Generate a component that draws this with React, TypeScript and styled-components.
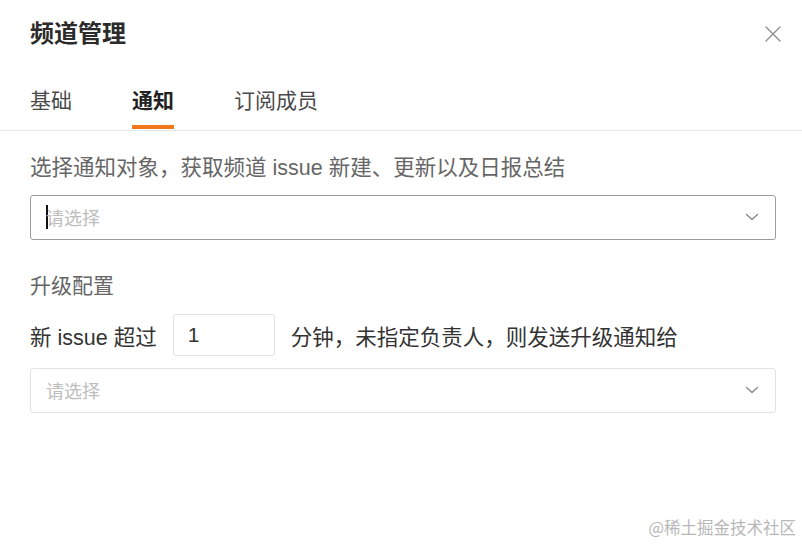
import React from "react";
import styled, { createGlobalStyle } from "styled-components";

const GlobalStyle = createGlobalStyle`
  html, body {
    margin: 0;
    padding: 0;
    background: #fff;
  }
  body {
    font-family: "Liberation Sans", "Noto Sans CJK SC", sans-serif;
  }
`;

const tabs = ["基础", "通知", "订阅成员"];

function Chevron() {
  return (
    <svg width="14" height="14" viewBox="0 0 14 14" fill="none">
      <path d="M1.5 4.5 L7 9.5 L12.5 4.5" stroke="#8a8a8a" strokeWidth="1.4" strokeLinecap="round" strokeLinejoin="round" />
    </svg>
  );
}

function Select({ focused }: { focused?: boolean }) {
  return (
    <SelectBox $focused={focused}>
      <Value>
        {focused && <Caret />}
        <Placeholder>请选择</Placeholder>
      </Value>
      <Chevron />
    </SelectBox>
  );
}

export default function App() {
  return (
    <>
      <GlobalStyle />
      <Page>
        <TitleRow>
          <Title>频道管理</Title>
          <CloseButton aria-label="关闭">
            <svg width="16" height="16" viewBox="0 0 16 16" fill="none">
              <path d="M1 1 L15 15 M15 1 L1 15" stroke="#8c8c8c" strokeWidth="1.3" strokeLinecap="round" />
            </svg>
          </CloseButton>
        </TitleRow>

        <TabBar>
          {tabs.map((t) => (
            <Tab key={t} $active={t === "通知"}>
              {t}
            </Tab>
          ))}
        </TabBar>

        <Body>
          <Description>选择通知对象，获取频道 issue 新建、更新以及日报总结</Description>
          <Select focused />

          <SectionLabel>升级配置</SectionLabel>
          <RuleRow>
            <span>新 issue 超过</span>
            <MinuteInput defaultValue="1" />
            <span>分钟，未指定负责人，则发送升级通知给</span>
          </RuleRow>
          <Select />
        </Body>

        <Watermark>@稀土掘金技术社区</Watermark>
      </Page>
    </>
  );
}

const Page = styled.div`
  position: relative;
  width: 802px;
  height: 544px;
  overflow: hidden;
  background: #fff;
`;

const TitleRow = styled.div`
  display: flex;
  align-items: center;
  justify-content: space-between;
  height: 68px;
  padding: 0 21px 0 30px;
`;

const Title = styled.h1`
  margin: 0;
  font-size: 24px;
  font-weight: 700;
  color: #2b2b2b;
  line-height: 1;
`;

const CloseButton = styled.button`
  display: flex;
  align-items: center;
  justify-content: center;
  width: 16px;
  height: 16px;
  padding: 0;
  border: none;
  background: none;
  cursor: pointer;
`;

const TabBar = styled.div`
  display: flex;
  gap: 60px;
  height: 62px;
  padding: 0 30px;
  border-bottom: 1px solid #e6e6e6;
`;

const Tab = styled.div<{ $active?: boolean }>`
  position: relative;
  display: flex;
  align-items: center;
  font-size: 21px;
  font-weight: ${(p) => (p.$active ? 700 : 400)};
  color: ${(p) => (p.$active ? "#222" : "#4a4a4a")};
  cursor: pointer;

  &::after {
    content: "";
    display: ${(p) => (p.$active ? "block" : "none")};
    position: absolute;
    left: 0;
    right: 0;
    bottom: 1px;
    height: 4px;
    background: #f0781a;
  }
`;

const Body = styled.div`
  display: flex;
  flex-direction: column;
  padding: 22px 26px 0 30px;
`;

const Description = styled.div`
  font-size: 21.5px;
  line-height: 30px;
  color: #666;
  margin-bottom: 12px;
`;

const SelectBox = styled.div<{ $focused?: boolean }>`
  box-sizing: border-box;
  display: flex;
  align-items: center;
  justify-content: space-between;
  height: 45px;
  padding: 0 16px 2px 15px;
  border: 1px solid ${(p) => (p.$focused ? "#9c9ca4" : "#e3e3e3")};
  border-radius: 3px;
  background: #fff;
`;

const Value = styled.div`
  display: flex;
  align-items: center;
`;

const Caret = styled.span`
  width: 2px;
  height: 24px;
  background: #111;
  margin-right: -2px;
`;

const Placeholder = styled.span`
  font-size: 18px;
  color: #bdbdbd;
`;

const SectionLabel = styled.div`
  margin-top: 31px;
  font-size: 21px;
  line-height: 30px;
  color: #666;
`;

const RuleRow = styled.div`
  display: flex;
  align-items: center;
  gap: 16px;
  margin: 13px 0 12px;
  font-size: 21.5px;
  color: #333;
`;

const MinuteInput = styled.input`
  box-sizing: border-box;
  width: 102px;
  height: 42px;
  padding: 0 14px;
  border: 1px solid #e3e3e3;
  border-radius: 3px;
  font-family: "Liberation Sans", "Noto Sans CJK SC", sans-serif;
  font-size: 21px;
  color: #333;
  outline: none;
`;

const Watermark = styled.div`
  position: absolute;
  right: 6px;
  bottom: 5px;
  font-family: "Noto Sans CJK SC", sans-serif;
  font-size: 16.5px;
  color: #b8b8b8;
`;
